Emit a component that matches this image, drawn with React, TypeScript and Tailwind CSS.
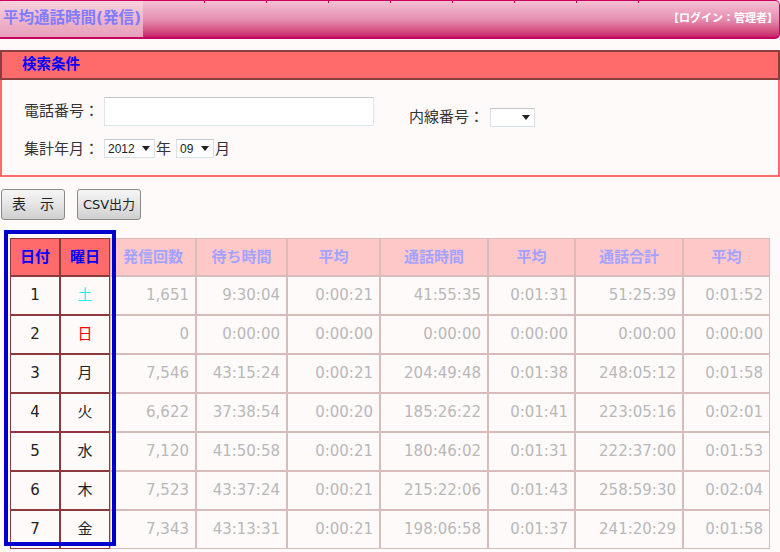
import React from 'react';

const jp = "font-['DejaVu_Sans','Noto_Sans_CJK_JP',sans-serif]";

const rows: string[][] = [
  ['1', '土', '1,651', '9:30:04', '0:00:21', '41:55:35', '0:01:31', '51:25:39', '0:01:52'],
  ['2', '日', '0', '0:00:00', '0:00:00', '0:00:00', '0:00:00', '0:00:00', '0:00:00'],
  ['3', '月', '7,546', '43:15:24', '0:00:21', '204:49:48', '0:01:38', '248:05:12', '0:01:58'],
  ['4', '火', '6,622', '37:38:54', '0:00:20', '185:26:22', '0:01:41', '223:05:16', '0:02:01'],
  ['5', '水', '7,120', '41:50:58', '0:00:21', '180:46:02', '0:01:31', '222:37:00', '0:01:53'],
  ['6', '木', '7,523', '43:37:24', '0:00:21', '215:22:06', '0:01:43', '258:59:30', '0:02:04'],
  ['7', '金', '7,343', '43:13:31', '0:00:21', '198:06:58', '0:01:37', '241:20:29', '0:01:58'],
];

const heads = ['日付', '曜日', '発信回数', '待ち時間', '平均', '通話時間', '平均', '通話合計', '平均'];
const widths = ['w-[50px]', 'w-[50px]', 'w-[86px]', 'w-[91px]', 'w-[93px]', 'w-[108px]', 'w-[87px]', 'w-[108px]', 'w-[87px]'];

function FakeSelect({ value, width }: { value: string; width: string }) {
  return (
    <div className={`${width} h-[19px] flex items-center justify-between bg-white border border-[#d6e2e8] border-t-[#c4c8cc] pl-[3px] pr-[4px]`}>
      <span className="text-[12px] text-[#222] font-['Liberation_Sans',sans-serif]">{value}</span>
      <span className="w-0 h-0 border-l-[4px] border-r-[4px] border-t-[5px] border-l-transparent border-r-transparent border-t-[#222]" />
    </div>
  );
}

function Button({ children, width }: { children: React.ReactNode; width: string }) {
  return (
    <button className={`${width} h-[31px] rounded-[3px] border border-[#8a8a8a] bg-linear-to-b from-[#f6f6f6] via-[#e4e4e4] to-[#cfcfcf] text-[14px] text-[#222] flex items-center justify-center`}>
      {children}
    </button>
  );
}

export default function App() {
  return (
    <div className={`w-[780px] h-[552px] overflow-hidden bg-[#fffafa] ${jp}`}>
      {/* top bar */}
      <div className="h-[39px] flex rounded-r-[5px] border-t border-r border-[#c80060] border-b-2 bg-linear-to-b from-[#f4c0d2] via-[#e590b2] to-[#c92069]">
        <div className="w-[143px] shrink-0 rounded-tl-[3px] bg-linear-to-b from-[#f8d2de] via-[#f0b6ca] to-[#e6a0bb] flex items-center pl-[3px]">
          <span className="text-[15.5px] font-bold text-[#7f7cff]">平均通話時間(発信)</span>
        </div>
        <div className="flex-1 relative flex items-center justify-end pr-[1px]">
          <div className="absolute left-0 top-0 flex">
            {Array.from({ length: 8 }).map((_, i) => (
              <div key={i} className="w-[62px] h-[2px] border-r border-[#c80060]" />
            ))}
          </div>
          <span className="text-[11px] font-bold text-white">【ログイン：管理者】</span>
        </div>
      </div>

      {/* search conditions */}
      <div className="mt-[11px]">
        <div className="h-[30px] bg-[#ff6b6b] border-2 border-[#8a3e3e] flex items-center pl-[20px]">
          <span className="text-[14.5px] font-bold text-[#0000ff]">検索条件</span>
        </div>
        <div className="h-[97px] border-2 border-t-0 border-[#ff6b6b] pl-[22px] pt-[17px] text-[15px] text-[#333]">
          <div className="flex items-start">
            <div className="flex items-center">
              <span className="w-[80px]">電話番号：</span>
              <div className="w-[270px] h-[29px] bg-white border border-[#dbe6ec] border-t-[#c6c6c6]" />
            </div>
            <div className="flex items-center ml-[35px] mt-[9px]">
              <span className="w-[81px]">内線番号：</span>
              <FakeSelect value="" width="w-[45px]" />
            </div>
          </div>
          <div className="flex items-center mt-[9px]">
            <span className="w-[80px]">集計年月：</span>
            <FakeSelect value="2012" width="w-[51px]" />
            <span className="ml-[1px]">年</span>
            <div className="ml-[5px]">
              <FakeSelect value="09" width="w-[38px]" />
            </div>
            <span className="ml-[1px]">月</span>
          </div>
        </div>
      </div>

      {/* buttons */}
      <div className="flex gap-[12px] mt-[12px] pl-[1px]">
        <Button width="w-[64px]">表　示</Button>
        <Button width="w-[64px]"><span className="text-[13px]">CSV出力</span></Button>
      </div>

      {/* table */}
      <div className="relative ml-[10px] mt-[18px] w-[760px]">
        <table className="border-separate border-spacing-0 table-fixed w-[760px]">
          <thead>
            <tr>
              {heads.map((h, i) => (
                <th
                  key={i}
                  className={`${widths[i]} h-[38px] p-0 border text-[15px] font-bold text-center ${
                    i < 2
                      ? 'bg-[#ff6b6b] border-[#8a3a3a] text-[#0000ff]'
                      : 'bg-[#ffc8c8] border-[#d8bcbc] text-[#a3a3ff]'
                  }`}
                >
                  {h}
                </th>
              ))}
            </tr>
          </thead>
          <tbody>
            {rows.map((r, ri) => (
              <tr key={ri}>
                {r.map((c, ci) => {
                  let color = 'text-[#222]';
                  if (ci === 1 && c === '土') color = 'text-[#22eeee]';
                  if (ci === 1 && c === '日') color = 'text-[#ff0000]';
                  return (
                    <td
                      key={ci}
                      className={`h-[39px] p-0 border text-[15px] bg-[#fffafa] ${
                        ci < 2
                          ? `border-[#8a3a3a] text-center ${color}`
                          : 'border-[#d8bcbc] text-right pr-[6px] text-[#b8b8b8]'
                      }`}
                    >
                      {c}
                    </td>
                  );
                })}
              </tr>
            ))}
          </tbody>
        </table>
        <div className="absolute left-[-6px] top-[-8px] w-[112px] h-[316px] border-4 border-[#0000cc] pointer-events-none" />
      </div>
    </div>
  );
}
